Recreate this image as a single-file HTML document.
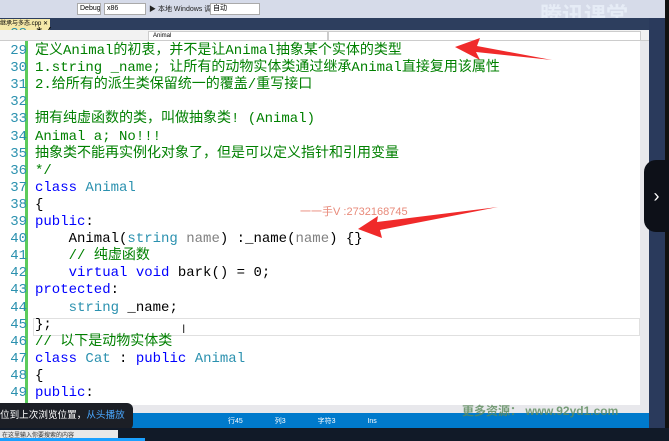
<!DOCTYPE html><html><head><meta charset="utf-8"><style>
*{margin:0;padding:0;box-sizing:border-box}
body{width:669px;height:441px;overflow:hidden;background:#fff;position:relative;font-family:"Liberation Sans","Noto Sans CJK SC",sans-serif}
.a{position:absolute}
.ln{position:absolute;left:0;width:27px;height:17px;line-height:17px;text-align:right;color:#2b91af;font:14px/17px "Liberation Mono",monospace}
.cd{position:absolute;left:35px;height:17px;white-space:pre;font:14px/17px "Liberation Mono","Noto Sans CJK SC",monospace;color:#000}
.cd span{line-height:17px}
.g{color:#008000}.k{color:#0000ff}.t{color:#2b91af}.p{color:#808080}
.bx{position:absolute;top:3px;height:12px;background:#fff;border:1px solid #aaa;font-size:7px;line-height:10px;padding-left:2px;white-space:nowrap;overflow:hidden}
</style></head><body>
<div class="a" style="left:0;top:0;width:669px;height:18px;background:#d6dbe9"></div>
<div class="bx" style="left:77px;width:24px">Debug</div>
<div class="bx" style="left:104px;width:42px">x86</div>
<div class="a" style="left:149px;top:4px;font-size:7px;color:#222;white-space:nowrap">▶ 本地 Windows 调试器 ▾</div>
<div class="bx" style="left:210px;width:50px">自动</div>
<div class="a" style="left:540px;top:-2px;font-size:22px;color:#e6ecf6;font-weight:bold">腾讯课堂</div>
<div class="a" style="left:0;top:18px;width:649px;height:12px;background:#2d3e5e"></div>
<div class="a" style="left:0;top:19px;width:50px;height:11px;background:#f5e8a8;font-size:6px;line-height:11px;white-space:nowrap;overflow:hidden">继承与多态.cpp ✕</div>
<div class="a" style="left:25px;top:41px;width:3px;height:364px;background:#5ccb5c"></div>
<div class="a" style="left:640px;top:41px;width:9px;height:364px;background:#e8e8ec"></div>
<div class="a" style="left:649px;top:18px;width:16px;height:423px;background:#2a3a5c"></div>
<div class="a" style="left:665px;top:0;width:4px;height:441px;background:#111"></div>
<div class="a" style="left:644px;top:160px;width:25px;height:72px;background:#0d1018;border-radius:12px 0 0 12px;color:#fff;font-size:18px;line-height:72px;text-align:center">›</div>
<div class="a" style="left:33px;top:318px;width:607px;height:18px;border:1px solid #e0e0e0"></div>
<div id="code"></div>
<script>
var L=[
[28,'*/',''],
[29,'<span class=g>定义Animal的初衷，并不是让Animal抽象某个实体的类型</span>'],
[30,'<span class=g>1.string _name; 让所有的动物实体类通过继承Animal直接复用该属性</span>'],
[31,'<span class=g>2.给所有的派生类保留统一的覆盖/重写接口</span>'],
[32,''],
[33,'<span class=g>拥有纯虚函数的类，叫做抽象类! (Animal)</span>'],
[34,'<span class=g>Animal a; No!!!</span>'],
[35,'<span class=g>抽象类不能再实例化对象了，但是可以定义指针和引用变量</span>'],
[36,'<span class=g>*/</span>'],
[37,'<span class=k>class</span> <span class=t>Animal</span>'],
[38,'{'],
[39,'<span class=k>public</span>:'],
[40,'    Animal(<span class=t>string</span> <span class=p>name</span>) :_name(<span class=p>name</span>) {}'],
[41,'    <span class=g>// 纯虚函数</span>'],
[42,'    <span class=k>virtual</span> <span class=k>void</span> bark() = 0;'],
[43,'<span class=k>protected</span>:'],
[44,'    <span class=t>string</span> _name;'],
[45,'};'],
[46,'<span class=g>// 以下是动物实体类</span>'],
[47,'<span class=k>class</span> <span class=t>Cat</span> : <span class=k>public</span> <span class=t>Animal</span>'],
[48,'{'],
[49,'<span class=k>public</span>:']];
var h='';L.forEach(function(l){var y=44+(l[0]-29)*17.1-1;h+='<div class=ln style="top:'+y+'px">'+l[0]+'</div><div class=cd style="top:'+y+'px">'+l[1]+'</div>';});
document.getElementById('code').innerHTML=h;
</script>
<div class="a" style="left:0;top:30px;width:649px;height:11px;background:#f2f2f2;border-bottom:1px solid #ccc"></div>
<div class="a" style="left:148px;top:31px;width:180px;height:10px;background:#fff;border:1px solid #ccc;font-size:6px;line-height:8px;padding-left:4px">Animal</div>
<div class="a" style="left:328px;top:31px;width:313px;height:10px;background:#fff;border:1px solid #ccc"></div>
<div class="a" style="left:300px;top:203px;font-size:11px;color:#e88a7a">一一手V :2732168745</div>
<div class="a" style="left:182px;top:322px;font-size:12px;color:#333">I</div>
<svg class="a" style="left:0;top:0" width="669" height="441">
<polygon points="455,47 480,38 477,46 552,60 476,52 480,60" fill="#f02a2a"/>
<polygon points="358,229 378,216 377,222 498,207 380,230 382,238" fill="#f02a2a"/>
</svg>
<div class="a" style="left:0;top:405px;width:649px;height:8px;background:#e8e8ec"></div>
<div class="a" style="left:0;top:413px;width:649px;height:15px;background:#007acc"></div>
<div class="a" style="left:228px;top:416px;font-size:7px;color:#fff;word-spacing:30px">行45 列3 字符3 Ins</div>
<div class="a" style="left:462px;top:402px;font-size:12px;font-weight:bold;color:#5a8a5a;opacity:.8;white-space:nowrap">更多资源： www.92yd1.com</div>
<div class="a" style="left:0;top:403px;width:133px;height:27px;background:#1c1f26;border-radius:0 6px 6px 0;font-size:9.6px;line-height:26px;color:#fff;white-space:nowrap;overflow:hidden">位到上次浏览位置，<span style="color:#4aa8ff">从头播放</span></div>
<div class="a" style="left:0;top:428px;width:669px;height:13px;background:#111a28"></div>
<div class="a" style="left:0;top:430px;width:118px;height:11px;background:#e8e8e8;font-size:6px;color:#333;padding-left:2px">在这里输入你要搜索的内容</div>
<div class="a" style="left:0;top:438px;width:145px;height:3px;background:#1aa0ff"></div>
</body></html>
